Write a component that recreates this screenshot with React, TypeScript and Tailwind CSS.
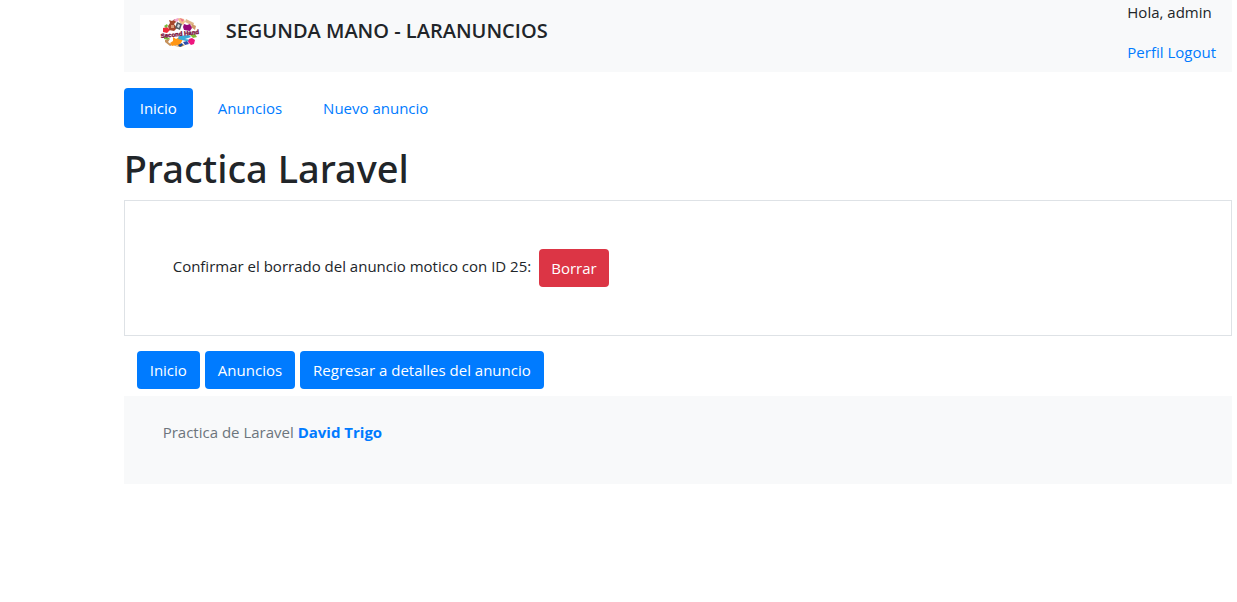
import type { ReactNode } from "react";

function Logo() {
  return (
    <svg viewBox="0 0 80 35" className="h-[35px] w-20 shrink-0 bg-white" role="img" aria-label="Second Hand">
      <path d="M29 5l3 1 3-2 1 3-2 2 3 4-3 3-5-1-1-4 2-3z" fill="#a5472c" />
      <path d="M31 10h3v3h-3z" fill="#d99a76" />
      <path d="M33 5l5-2 2 1-3 3z" fill="#f3a3cb" />
      <path d="M38 4l2-1 4 1 1 3-2 3-3-2z" fill="#f0c08a" />
      <path d="M40 3l4 2-2 2z" fill="#ef6f8f" />
      <path d="M46 4l8 4-1 3-8-4z" fill="#dfb78c" />
      <path d="M52 9l4 2-1 4-4-3z" fill="#cf9a68" />
      <path d="M37 7l5 2-2 6-5-2z" fill="#555b63" />
      <path d="M38 9l2 1-1 3-2-1z" fill="#d8dde1" />
      <path d="M44 9l3 1 3-1 2 4-2 3-6-1-1-3z" fill="#970979" />
      <path d="M23 13l4-1 3 3-3 3-4-1z" fill="#ef2b3a" />
      <path d="M24 11l3-2 1 2-2 2z" fill="#79b93c" />
      <path d="M24 22c3-1 4 1 6 1l-2 2-4-1z" fill="#79b93c" />
      <path d="M25 25l5-1-2 3 4 3-2 1-5-4z" fill="#c6925c" />
      <path d="M33 22l3 2 5-3 2 3-2 4-2 3-3-1-4 1-2-3 3-2z" fill="#ff9717" />
      <path d="M39 21l10-1 2 2-6 2 6 1-1 2-8-2-4-1z" fill="#39abd8" />
      <path d="M50 20l5-1 2 3-4 1z" fill="#83bb35" />
      <path d="M49 24l3-1 3 2-1 4-3 1-3-3z" fill="#ef167f" />
      <path d="M43 27l4-1 2 3-4 1z" fill="#304eaa" />
      <path d="M34 30l4 1 4-2 3 1-4 2-6-1z" fill="#b98342" />
      <path d="M38 30l4-2 1 2-3 2z" fill="#174c9f" />
      <text
        x="40"
        y="21"
        textAnchor="middle"
        transform="rotate(-6 40 20)"
        className="font-['Liberation_Sans'] text-[6px] font-bold"
        fill="#7b1242"
        stroke="#7b1242"
        strokeWidth="0.4"
      >
        Second Hand
      </text>
    </svg>
  );
}

function ButtonLink({ children }: { children: ReactNode }) {
  return (
    <a href="#" className="rounded bg-[#007bff] px-[13px] py-[7px] text-white">
      {children}
    </a>
  );
}

export default function App() {
  return (
    <div className="ml-[10%] mr-[5px] font-['Open_Sans','Noto_Sans',sans-serif] text-[15px] leading-6 text-[#212529]">
      <header className="flex h-[72px] items-start justify-between bg-[#f8f9fa] px-4">
        <div className="flex items-start gap-[6px] pt-[15px]">
          <Logo />
          <span className="text-[20px] font-semibold leading-8">SEGUNDA MANO - LARANUNCIOS</span>
        </div>
        <div className="space-y-4">
          <p>Hola, admin</p>
          <p className="text-[#007bff]">
            <a href="#">Perfil</a> <a href="#">Logout</a>
          </p>
        </div>
      </header>

      <nav className="my-4 flex gap-[9px] text-[#007bff]" aria-label="Principal">
        <a href="#" aria-current="page" className="rounded bg-[#007bff] px-4 py-2 text-white">Inicio</a>
        <a href="#" className="px-4 py-2">Anuncios</a>
        <a href="#" className="px-4 py-2">Nuevo anuncio</a>
      </nav>

      <main>
        <h1 className="mb-2 font-['Noto_Sans',sans-serif] text-[38px] font-medium leading-[48px]">Practica Laravel</h1>
        <form className="flex items-start gap-2 border border-[#dee2e6] p-12" onSubmit={(e) => e.preventDefault()}>
          <label htmlFor="borrar" className="py-[5px]">Confirmar el borrado del anuncio motico con ID 25:</label>
          <button id="borrar" type="submit" className="rounded bg-[#dc3545] px-3 py-[7px] text-white">Borrar</button>
        </form>
        <div className="flex gap-[5px] px-[13px] pb-[7px] pt-[15px]">
          <ButtonLink>Inicio</ButtonLink>
          <ButtonLink>Anuncios</ButtonLink>
          <ButtonLink>Regresar a detalles del anuncio</ButtonLink>
        </div>
      </main>

      <footer className="bg-[#f8f9fa] px-[39px] pb-10 pt-6 text-[#6c757d]">
        <p>
          Practica de Laravel <a href="#" className="font-bold text-[#007bff]">David Trigo</a>
        </p>
      </footer>
    </div>
  );
}
